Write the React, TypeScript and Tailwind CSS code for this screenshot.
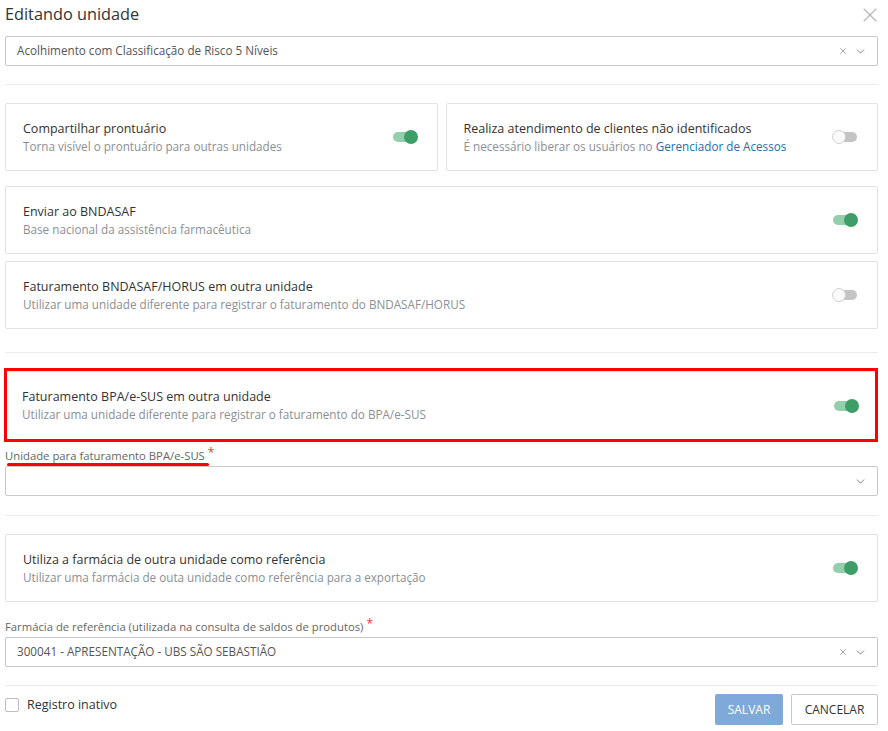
import { X, ChevronDown } from "lucide-react";

type Opt = { title: string; desc: React.ReactNode; on: boolean };

function Toggle({ on }: { on: boolean }) {
  return (
    <div className="relative w-[24px] h-[16px] flex items-center shrink-0">
      <div className={`w-[24px] h-[10px] rounded-full ${on ? "bg-[#93cfaa]" : "bg-[#c4c4c4]"}`} />
      {on ? (
        <div className="absolute right-[-1px] top-[1px] w-[14px] h-[14px] rounded-full bg-[#3f9d67]" />
      ) : (
        <div className="absolute left-[-1px] top-[1px] w-[14px] h-[14px] rounded-full bg-[#fafafa] border border-[#d0d0d0]" />
      )}
    </div>
  );
}

function Card({ title, desc, on, className = "" }: Opt & { className?: string }) {
  return (
    <div className={`h-[68px] border border-[#e2e2e2] rounded-[2px] bg-white flex items-center justify-between pl-[17px] pr-[20px] ${className}`}>
      <div className="flex flex-col">
        <span className="text-[12.5px] leading-[18px] text-[#333]">{title}</span>
        <span className="text-[11.7px] leading-[17px] text-[#8b8f96]">{desc}</span>
      </div>
      <Toggle on={on} />
    </div>
  );
}

function Select({ value, clear = true }: { value?: string; clear?: boolean }) {
  return (
    <div className="h-[30px] border border-[#c8c8c8] rounded-[2px] bg-white flex items-center pl-[11px] pr-[10px]">
      <span className="flex-1 text-[11.7px] text-[#555]">{value}</span>
      {clear && <X size={10} strokeWidth={1.5} className="text-[#777] mr-[6px]" />}
      <ChevronDown size={13} strokeWidth={1.5} className="text-[#666]" />
    </div>
  );
}

function Label({ text }: { text: string }) {
  return (
    <div className="text-[11.3px] leading-[16px] text-[#666] flex items-start">
      <span>{text}</span>
      <span className="text-[#e53935] ml-[3px] text-[12px] leading-[10px]">*</span>
    </div>
  );
}

const Divider = () => <div className="h-px bg-[#ececec]" />;

export default function App() {
  return (
    <div className="w-[888px] h-[731px] bg-white pl-[5px] pr-[10px] font-['Open_Sans',sans-serif] overflow-hidden">
      <div className="h-[28px] flex items-center justify-between">
        <h1 className="text-[16.3px] text-[#333]">Editando unidade</h1>
        <X size={24} strokeWidth={1.1} className="text-[#b5b5b5] mr-[-4px] mt-[1px]" />
      </div>
      <div className="mt-[8px]">
        <Select value="Acolhimento com Classificação de Risco 5 Níveis" />
      </div>
      <div className="mt-[18px]"><Divider /></div>

      <div className="mt-[18px] grid grid-cols-2 gap-[8px]">
        <Card title="Compartilhar prontuário" desc="Torna visível o prontuário para outras unidades" on />
        <Card
          title="Realiza atendimento de clientes não identificados"
          desc={<>É necessário liberar os usuários no <span className="text-[#2c6cab]">Gerenciador de Acessos</span></>}
          on={false}
        />
      </div>
      <Card className="mt-[15px]" title="Enviar ao BNDASAF" desc="Base nacional da assistência farmacêutica" on />
      <Card className="mt-[7px]" title="Faturamento BNDASAF/HORUS em outra unidade" desc="Utilizar uma unidade diferente para registrar o faturamento do BNDASAF/HORUS" on={false} />
      <div className="mt-[23px]"><Divider /></div>

      <div className="mt-[15px] border-[3px] border-[#ff0000] ml-[-1px]">
        <div className="border-t border-[#e2e2e2]">
          <div className="h-[67px] flex items-center justify-between pl-[15px] pr-[17px]">
            <div className="flex flex-col">
              <span className="text-[12.5px] leading-[18px] text-[#333]">Faturamento BPA/e-SUS em outra unidade</span>
              <span className="text-[11.7px] leading-[17px] text-[#8b8f96]">Utilizar uma unidade diferente para registrar o faturamento do BPA/e-SUS</span>
            </div>
            <Toggle on />
          </div>
        </div>
      </div>
      <div className="mt-[6px] relative">
        <Label text="Unidade para faturamento BPA/e-SUS" />
        <div className="absolute left-[2px] top-[15px] w-[202px] h-[3px] rounded-full bg-[#ff0000]" />
      </div>
      <div className="mt-[2px]">
        <Select clear={false} />
      </div>
      <div className="mt-[19px]"><Divider /></div>

      <Card className="mt-[18px]" title="Utiliza a farmácia de outra unidade como referência" desc="Utilizar uma farmácia de outa unidade como referência para a exportação" on />

      <div className="mt-[17px]">
        <Label text="Farmácia de referência (utilizada na consulta de saldos de produtos)" />
      </div>
      <div className="mt-[2px]">
        <Select value="300041 - APRESENTAÇÃO - UBS SÃO SEBASTIÃO" />
      </div>
      <div className="mt-[18px]"><Divider /></div>

      <div className="mt-[8px] flex items-center justify-between">
        <label className="flex items-center gap-[8px] self-start mt-[2px]">
          <span className="w-[14px] h-[14px] border border-[#bdbdbd] rounded-[2px] bg-white" />
          <span className="text-[12.5px] text-[#333]">Registro inativo</span>
        </label>
        <div className="flex gap-[8px]">
          <button className="h-[31px] w-[68px] rounded-[2px] bg-[#7ea9d8] text-white text-[12px]">SALVAR</button>
          <button className="h-[31px] w-[87px] rounded-[2px] border border-[#c8c8c8] bg-white text-[#333] text-[12px]">CANCELAR</button>
        </div>
      </div>
    </div>
  );
}
